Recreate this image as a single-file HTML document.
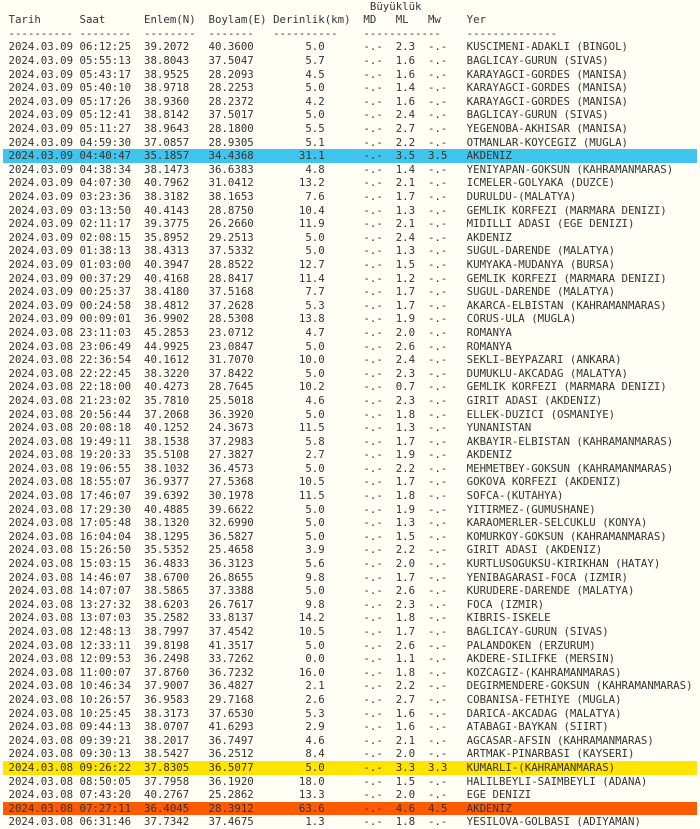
<!DOCTYPE html>
<html><head><meta charset="utf-8"><style>
html,body{margin:0;padding:0;background:#fffff5;}
body{width:700px;height:829px;overflow:hidden;}
#t{padding-left:8.5px;margin-top:-0.3px;font-family:"DejaVu Sans Mono","Liberation Mono",monospace;font-size:10.73px;color:#333;}
#t div{white-space:pre;height:13.6px;line-height:13.6px;}
#t div.h{margin-left:-5.5px;padding-left:5.5px;width:688.5px;}
.c{background:#3fc4ee;}.y{background:#ffe400;}.o{background:#ff5a00;}
</style></head><body><div id="t">
<div>                                                        Büyüklük</div>
<div>Tarih      Saat      Enlem(N)  Boylam(E) Derinlik(km)  MD   ML   Mw    Yer</div>
<div>---------- --------  --------  -------   ----------    ------------    --------------</div>
<div>2024.03.09 06:12:25  39.2072   40.3600        5.0      -.-  2.3  -.-   KUSCIMENI-ADAKLI (BINGOL)</div>
<div>2024.03.09 05:55:13  38.8043   37.5047        5.7      -.-  1.6  -.-   BAGLICAY-GURUN (SIVAS)</div>
<div>2024.03.09 05:43:17  38.9525   28.2093        4.5      -.-  1.6  -.-   KARAYAGCI-GORDES (MANISA)</div>
<div>2024.03.09 05:40:10  38.9718   28.2253        5.0      -.-  1.4  -.-   KARAYAGCI-GORDES (MANISA)</div>
<div>2024.03.09 05:17:26  38.9360   28.2372        4.2      -.-  1.6  -.-   KARAYAGCI-GORDES (MANISA)</div>
<div>2024.03.09 05:12:41  38.8142   37.5017        5.0      -.-  2.4  -.-   BAGLICAY-GURUN (SIVAS)</div>
<div>2024.03.09 05:11:27  38.9643   28.1800        5.5      -.-  2.7  -.-   YEGENOBA-AKHISAR (MANISA)</div>
<div>2024.03.09 04:59:30  37.0857   28.9305        5.1      -.-  2.2  -.-   OTMANLAR-KOYCEGIZ (MUGLA)</div>
<div class="h c">2024.03.09 04:40:47  35.1857   34.4368       31.1      -.-  3.5  3.5   AKDENIZ</div>
<div>2024.03.09 04:38:34  38.1473   36.6383        4.8      -.-  1.4  -.-   YENIYAPAN-GOKSUN (KAHRAMANMARAS)</div>
<div>2024.03.09 04:07:30  40.7962   31.0412       13.2      -.-  2.1  -.-   ICMELER-GOLYAKA (DUZCE)</div>
<div>2024.03.09 03:23:36  38.3182   38.1653        7.6      -.-  1.7  -.-   DURULDU-(MALATYA)</div>
<div>2024.03.09 03:13:50  40.4143   28.8750       10.4      -.-  1.3  -.-   GEMLIK KORFEZI (MARMARA DENIZI)</div>
<div>2024.03.09 02:11:17  39.3775   26.2660       11.9      -.-  2.1  -.-   MIDILLI ADASI (EGE DENIZI)</div>
<div>2024.03.09 02:08:15  35.8952   29.2513        5.0      -.-  2.4  -.-   AKDENIZ</div>
<div>2024.03.09 01:38:13  38.4313   37.5332        5.0      -.-  1.3  -.-   SUGUL-DARENDE (MALATYA)</div>
<div>2024.03.09 01:03:00  40.3947   28.8522       12.7      -.-  1.5  -.-   KUMYAKA-MUDANYA (BURSA)</div>
<div>2024.03.09 00:37:29  40.4168   28.8417       11.4      -.-  1.2  -.-   GEMLIK KORFEZI (MARMARA DENIZI)</div>
<div>2024.03.09 00:25:37  38.4180   37.5168        7.7      -.-  1.7  -.-   SUGUL-DARENDE (MALATYA)</div>
<div>2024.03.09 00:24:58  38.4812   37.2628        5.3      -.-  1.7  -.-   AKARCA-ELBISTAN (KAHRAMANMARAS)</div>
<div>2024.03.09 00:09:01  36.9902   28.5308       13.8      -.-  1.9  -.-   CORUS-ULA (MUGLA)</div>
<div>2024.03.08 23:11:03  45.2853   23.0712        4.7      -.-  2.0  -.-   ROMANYA</div>
<div>2024.03.08 23:06:49  44.9925   23.0847        5.0      -.-  2.6  -.-   ROMANYA</div>
<div>2024.03.08 22:36:54  40.1612   31.7070       10.0      -.-  2.4  -.-   SEKLI-BEYPAZARI (ANKARA)</div>
<div>2024.03.08 22:22:45  38.3220   37.8422        5.0      -.-  2.3  -.-   DUMUKLU-AKCADAG (MALATYA)</div>
<div>2024.03.08 22:18:00  40.4273   28.7645       10.2      -.-  0.7  -.-   GEMLIK KORFEZI (MARMARA DENIZI)</div>
<div>2024.03.08 21:23:02  35.7810   25.5018        4.6      -.-  2.3  -.-   GIRIT ADASI (AKDENIZ)</div>
<div>2024.03.08 20:56:44  37.2068   36.3920        5.0      -.-  1.8  -.-   ELLEK-DUZICI (OSMANIYE)</div>
<div>2024.03.08 20:08:18  40.1252   24.3673       11.5      -.-  1.3  -.-   YUNANISTAN</div>
<div>2024.03.08 19:49:11  38.1538   37.2983        5.8      -.-  1.7  -.-   AKBAYIR-ELBISTAN (KAHRAMANMARAS)</div>
<div>2024.03.08 19:20:33  35.5108   27.3827        2.7      -.-  1.9  -.-   AKDENIZ</div>
<div>2024.03.08 19:06:55  38.1032   36.4573        5.0      -.-  2.2  -.-   MEHMETBEY-GOKSUN (KAHRAMANMARAS)</div>
<div>2024.03.08 18:55:07  36.9377   27.5368       10.5      -.-  1.7  -.-   GOKOVA KORFEZI (AKDENIZ)</div>
<div>2024.03.08 17:46:07  39.6392   30.1978       11.5      -.-  1.8  -.-   SOFCA-(KUTAHYA)</div>
<div>2024.03.08 17:29:30  40.4885   39.6622        5.0      -.-  1.9  -.-   YITIRMEZ-(GUMUSHANE)</div>
<div>2024.03.08 17:05:48  38.1320   32.6990        5.0      -.-  1.3  -.-   KARAOMERLER-SELCUKLU (KONYA)</div>
<div>2024.03.08 16:04:04  38.1295   36.5827        5.0      -.-  1.5  -.-   KOMURKOY-GOKSUN (KAHRAMANMARAS)</div>
<div>2024.03.08 15:26:50  35.5352   25.4658        3.9      -.-  2.2  -.-   GIRIT ADASI (AKDENIZ)</div>
<div>2024.03.08 15:03:15  36.4833   36.3123        5.6      -.-  2.0  -.-   KURTLUSOGUKSU-KIRIKHAN (HATAY)</div>
<div>2024.03.08 14:46:07  38.6700   26.8655        9.8      -.-  1.7  -.-   YENIBAGARASI-FOCA (IZMIR)</div>
<div>2024.03.08 14:07:07  38.5865   37.3388        5.0      -.-  2.6  -.-   KURUDERE-DARENDE (MALATYA)</div>
<div>2024.03.08 13:27:32  38.6203   26.7617        9.8      -.-  2.3  -.-   FOCA (IZMIR)</div>
<div>2024.03.08 13:07:03  35.2582   33.8137       14.2      -.-  1.8  -.-   KIBRIS-ISKELE</div>
<div>2024.03.08 12:48:13  38.7997   37.4542       10.5      -.-  1.7  -.-   BAGLICAY-GURUN (SIVAS)</div>
<div>2024.03.08 12:33:11  39.8198   41.3517        5.0      -.-  2.6  -.-   PALANDOKEN (ERZURUM)</div>
<div>2024.03.08 12:09:53  36.2498   33.7262        0.0      -.-  1.1  -.-   AKDERE-SILIFKE (MERSIN)</div>
<div>2024.03.08 11:00:07  37.8760   36.7232       16.0      -.-  1.8  -.-   KOZCAGIZ-(KAHRAMANMARAS)</div>
<div>2024.03.08 10:46:34  37.9007   36.4827        2.1      -.-  2.2  -.-   DEGIRMENDERE-GOKSUN (KAHRAMANMARAS)</div>
<div>2024.03.08 10:26:57  36.9583   29.7168        2.6      -.-  2.7  -.-   COBANISA-FETHIYE (MUGLA)</div>
<div>2024.03.08 10:25:45  38.3173   37.6530        5.3      -.-  1.6  -.-   DARICA-AKCADAG (MALATYA)</div>
<div>2024.03.08 09:44:13  38.0707   41.6293        2.9      -.-  1.6  -.-   ATABAGI-BAYKAN (SIIRT)</div>
<div>2024.03.08 09:39:21  38.2017   36.7497        4.6      -.-  2.1  -.-   AGCASAR-AFSIN (KAHRAMANMARAS)</div>
<div>2024.03.08 09:30:13  38.5427   36.2512        8.4      -.-  2.0  -.-   ARTMAK-PINARBASI (KAYSERI)</div>
<div class="h y">2024.03.08 09:26:22  37.8305   36.5077        5.0      -.-  3.3  3.3   KUMARLI-(KAHRAMANMARAS)</div>
<div>2024.03.08 08:50:05  37.7958   36.1920       18.0      -.-  1.5  -.-   HALILBEYLI-SAIMBEYLI (ADANA)</div>
<div>2024.03.08 07:43:20  40.2767   25.2862       13.3      -.-  2.0  -.-   EGE DENIZI</div>
<div class="h o">2024.03.08 07:27:11  36.4045   28.3912       63.6      -.-  4.6  4.5   AKDENIZ</div>
<div>2024.03.08 06:31:46  37.7342   37.4675        1.3      -.-  1.8  -.-   YESILOVA-GOLBASI (ADIYAMAN)</div>
</div></body></html>
